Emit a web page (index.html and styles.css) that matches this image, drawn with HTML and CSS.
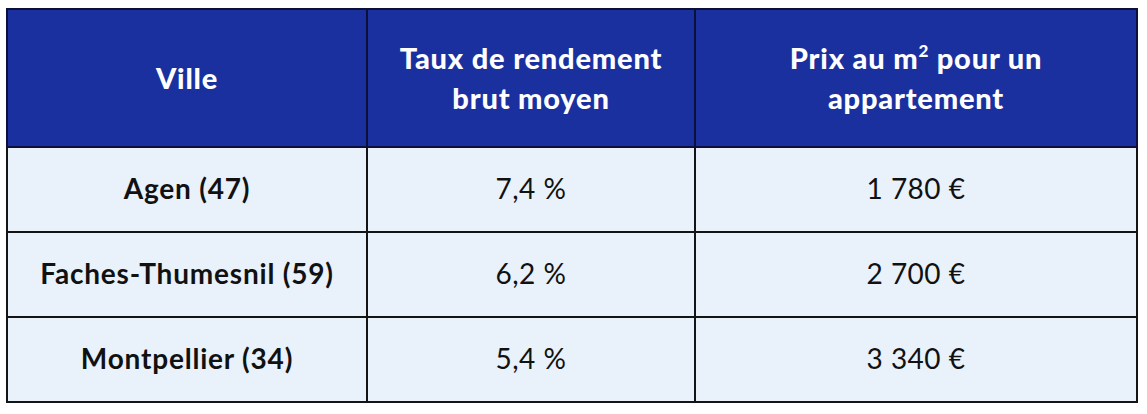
FILE: index.html
```html
<!DOCTYPE html>
<html lang="fr">
<head>
<meta charset="utf-8">
<title>Rendement</title>
<link rel="stylesheet" href="styles.css">
</head>
<body>
<table class="data">
  <colgroup>
    <col class="c1">
    <col class="c2">
    <col class="c3">
  </colgroup>
  <thead>
    <tr>
      <th>Ville</th>
      <th>Taux de rendement<br>brut moyen</th>
      <th>Prix au m<sup>2</sup> pour un<br>appartement</th>
    </tr>
  </thead>
  <tbody>
    <tr><td class="city">Agen (47)</td><td>7,4 %</td><td>1 780 €</td></tr>
    <tr><td class="city">Faches-Thumesnil (59)</td><td>6,2 %</td><td>2 700 €</td></tr>
    <tr><td class="city">Montpellier (34)</td><td>5,4 %</td><td>3 340 €</td></tr>
  </tbody>
</table>
</body>
</html>
```
FILE: styles.css
```css
html, body {
  margin: 0;
  padding: 0;
  background: #ffffff;
}
body {
  padding: 8px 0 0 6px;
  font-family: Lato, "Liberation Sans", sans-serif;
}
.data {
  border-collapse: collapse;
  width: 1130px;
  table-layout: fixed;
}
.c1 { width: 360px; }
.c2 { width: 328px; }
.c3 { width: 442px; }
.data th,
.data td {
  border: 2px solid #141414;
  text-align: center;
  vertical-align: middle;
  padding: 0;
}
.data th {
  background: #1b309f;
  color: #ffffff;
  font-weight: 900;
  font-size: 29px;
  letter-spacing: 0.8px;
  line-height: 40px;
  height: 136px;
  border-color: #0b0f3a;
}
.data th sup {
  font-size: 17px;
  line-height: 0;
  vertical-align: 12px;
}
.data td {
  background: #e9f1fa;
  color: #111111;
  font-size: 28px;
  letter-spacing: 0.5px;
  height: 79px;
  padding-bottom: 4px;
  font-weight: 400;
}
.data td.city {
  font-weight: 700;
  letter-spacing: 0.8px;
}
```
